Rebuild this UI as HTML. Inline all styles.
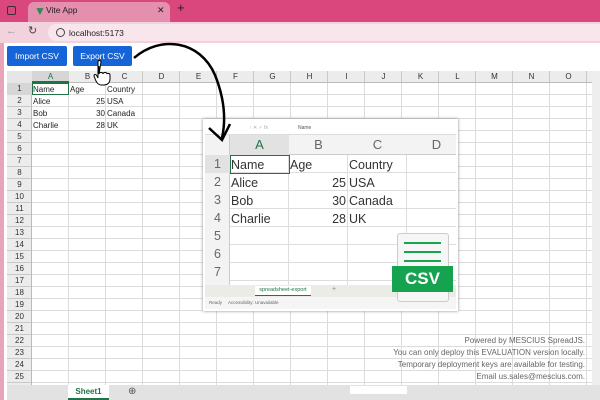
<!DOCTYPE html><html><head><style>
*{margin:0;padding:0;box-sizing:border-box}
body{width:600px;height:400px;overflow:hidden;position:relative;font-family:"Liberation Sans",sans-serif;background:#fff}
.abs{position:absolute}
.t{font-size:8px;color:#222;position:absolute;line-height:12px}
.ch{position:absolute;top:71px;height:12px;width:37px;text-align:center;font-size:8px;line-height:12px;color:#333}
.rh{position:absolute;left:7px;width:25px;height:12px;text-align:center;font-size:8px;line-height:12px;color:#333}
.bt{position:absolute;top:46px;height:20px;background:#1565d8;color:#fff;font-size:8.5px;line-height:20px;text-align:center;border-radius:2px}
.ot{position:absolute;font-size:12.5px;color:#333;line-height:18px}
.orh{position:absolute;left:205px;width:25px;text-align:center;font-size:12.5px;color:#666;line-height:18px}
.och{position:absolute;top:135px;height:20px;width:59px;text-align:center;font-size:13px;color:#666;line-height:20px}
</style></head><body>
<div class="abs" style="left:0;top:0;width:600px;height:22px;background:#d9477c"></div>
<div class="abs" style="left:28px;top:2px;width:142px;height:20px;background:#e48fad;border-radius:6px 6px 0 0"></div>
<div class="abs" style="left:7px;top:6px;width:9px;height:9px;border:1.5px solid #333;border-radius:2px"></div>
<div class="abs" style="left:34px;top:4px;font-size:12px;color:#2a8a5a">▼</div>
<div class="t" style="left:46px;top:4px;font-size:8.5px">Vite App</div>
<div class="t" style="left:157px;top:4px;font-size:9px">✕</div>
<div class="t" style="left:177px;top:2px;font-size:13px">+</div>
<div class="abs" style="left:0;top:22px;width:600px;height:21px;background:#f2d3dd"></div>
<div class="t" style="left:6px;top:25px;font-size:11px;color:#999">←</div>
<div class="t" style="left:28px;top:25px;font-size:11px;color:#444">↻</div>
<div class="abs" style="left:48px;top:24px;width:560px;height:17px;background:#f8e6ec;border-radius:9px"></div>
<div class="abs" style="left:56px;top:28px;width:9px;height:9px;border:1px solid #444;border-radius:50%"></div>
<div class="t" style="left:69px;top:27px;font-size:8.5px">localhost:5173</div>
<div class="abs" style="left:0;top:43px;width:4px;height:357px;background:#e9a3bb"></div>
<div class="bt" style="left:7px;width:60px">Import CSV</div>
<div class="bt" style="left:73px;width:59px">Export CSV</div>
<div class="abs" style="left:32px;top:71px;width:560px;height:314px;background:repeating-linear-gradient(90deg,transparent 0 36px,#dcdcdc 36px 37px),#fff"></div>
<div class="abs" style="left:7px;top:71px;width:585px;height:314px;background:repeating-linear-gradient(180deg,transparent 0 11px,#dcdcdc 11px 12px)"></div>
<div class="abs" style="left:32px;top:71px;width:560px;height:12px;background:repeating-linear-gradient(90deg,#ececec 0 36px,#c8c8c8 36px 37px);border-bottom:1px solid #bbb"></div>
<div class="abs" style="left:7px;top:71px;width:25px;height:314px;background:repeating-linear-gradient(180deg,#ececec 0 11px,#c8c8c8 11px 12px);border-right:1px solid #bbb"></div>
<div class="abs" style="left:7px;top:71px;width:25px;height:12px;background:#e6e6e6"></div>
<div class="abs" style="left:32px;top:71px;width:37px;height:12px;background:#d6d6d6;border-bottom:2px solid #217346"></div>
<div class="abs" style="left:7px;top:83px;width:25px;height:12px;background:#d6d6d6"></div>
<div class="ch" style="left:32px;color:#217346">A</div><div class="ch" style="left:69px">B</div><div class="ch" style="left:106px">C</div><div class="ch" style="left:143px">D</div><div class="ch" style="left:180px">E</div><div class="ch" style="left:217px">F</div><div class="ch" style="left:254px">G</div><div class="ch" style="left:291px">H</div><div class="ch" style="left:328px">I</div><div class="ch" style="left:365px">J</div><div class="ch" style="left:402px">K</div><div class="ch" style="left:439px">L</div><div class="ch" style="left:476px">M</div><div class="ch" style="left:513px">N</div><div class="ch" style="left:550px">O</div>
<div class="rh" style="top:83px">1</div><div class="rh" style="top:95px">2</div><div class="rh" style="top:107px">3</div><div class="rh" style="top:119px">4</div><div class="rh" style="top:131px">5</div><div class="rh" style="top:143px">6</div><div class="rh" style="top:155px">7</div><div class="rh" style="top:167px">8</div><div class="rh" style="top:179px">9</div><div class="rh" style="top:191px">10</div><div class="rh" style="top:203px">11</div><div class="rh" style="top:215px">12</div><div class="rh" style="top:227px">13</div><div class="rh" style="top:239px">14</div><div class="rh" style="top:251px">15</div><div class="rh" style="top:263px">16</div><div class="rh" style="top:275px">17</div><div class="rh" style="top:287px">18</div><div class="rh" style="top:299px">19</div><div class="rh" style="top:311px">20</div><div class="rh" style="top:323px">21</div><div class="rh" style="top:335px">22</div><div class="rh" style="top:347px">23</div><div class="rh" style="top:359px">24</div><div class="rh" style="top:371px">25</div>
<div class="abs" style="left:32px;top:83px;width:37px;height:12px;border:1px solid #217346"></div>
<div class="t" style="left:33px;top:84px">Name</div><div class="t" style="left:70px;top:84px">Age</div><div class="t" style="left:107px;top:84px">Country</div>
<div class="t" style="left:33px;top:96px">Alice</div><div class="t" style="left:70px;top:96px;width:35px;text-align:right">25</div><div class="t" style="left:107px;top:96px">USA</div>
<div class="t" style="left:33px;top:108px">Bob</div><div class="t" style="left:70px;top:108px;width:35px;text-align:right">30</div><div class="t" style="left:107px;top:108px">Canada</div>
<div class="t" style="left:33px;top:120px">Charlie</div><div class="t" style="left:70px;top:120px;width:35px;text-align:right">28</div><div class="t" style="left:107px;top:120px">UK</div>
<div class="abs" style="left:592px;top:71px;width:8px;height:314px;background:#eee"></div>
<div class="abs" style="left:7px;top:385px;width:593px;height:15px;background:#e2e2e2"></div>
<div class="abs" style="left:68px;top:385px;width:41px;height:15px;background:#fff;border-bottom:2px solid #217346;font-size:8px;font-weight:bold;color:#217346;text-align:center;line-height:14px">Sheet1</div>
<div class="t" style="left:128px;top:386px;font-size:10px;color:#555">⊕</div>
<div class="abs" style="left:350px;top:386px;width:57px;height:8px;background:#fff"></div>
<div class="abs" style="left:380px;top:335px;width:205px;font-size:8px;color:#666;text-align:right;line-height:12px">Powered by MESCIUS SpreadJS.<br>You can only deploy this EVALUATION version locally.<br>Temporary deployment keys are available for testing.<br>Email us.sales@mescius.com.</div>
<!-- overlay -->
<div class="abs" style="left:203px;top:119px;width:255px;height:192px;background:#fff;box-shadow:0 0 3px #888"></div>
<div class="abs" style="left:205px;top:121px;width:251px;height:14px;background:#fff;border-bottom:1px solid #ddd"></div>
<div class="t" style="left:298px;top:122px;font-size:5px;color:#555">Name</div>
<div class="t" style="left:250px;top:122px;font-size:5px;color:#aaa">⁝ ✕ ✓ fx</div>
<div class="abs" style="left:230px;top:135px;width:226px;height:150px;background:repeating-linear-gradient(90deg,transparent 0 58px,#ddd 58px 59px)"></div>
<div class="abs" style="left:205px;top:155px;width:251px;height:130px;background:repeating-linear-gradient(180deg,transparent 0 17px,#ddd 17px 18px)"></div>
<div class="abs" style="left:205px;top:135px;width:251px;height:20px;background:#f3f3f3;border-bottom:1px solid #ccc"></div>
<div class="abs" style="left:230px;top:135px;width:59px;height:20px;background:#e2e2e2"></div>
<div class="abs" style="left:205px;top:135px;width:25px;height:150px;background:#f3f3f3;border-right:1px solid #ccc"></div>
<div class="abs" style="left:205px;top:155px;width:25px;height:18px;background:#e2e2e2"></div>
<div class="och" style="left:230px;color:#217346">A</div><div class="och" style="left:289px">B</div><div class="och" style="left:348px">C</div><div class="och" style="left:407px">D</div>
<div class="orh" style="top:155px">1</div><div class="orh" style="top:173px">2</div><div class="orh" style="top:191px">3</div><div class="orh" style="top:209px">4</div><div class="orh" style="top:227px">5</div><div class="orh" style="top:245px">6</div><div class="orh" style="top:263px">7</div>
<div class="abs" style="left:230px;top:155px;width:60px;height:19px;border:1px solid #217346"></div>
<div class="ot" style="left:231px;top:156px">Name</div><div class="ot" style="left:290px;top:156px">Age</div><div class="ot" style="left:349px;top:156px">Country</div>
<div class="ot" style="left:231px;top:174px">Alice</div><div class="ot" style="left:290px;top:174px;width:56px;text-align:right">25</div><div class="ot" style="left:349px;top:174px">USA</div>
<div class="ot" style="left:231px;top:192px">Bob</div><div class="ot" style="left:290px;top:192px;width:56px;text-align:right">30</div><div class="ot" style="left:349px;top:192px">Canada</div>
<div class="ot" style="left:231px;top:210px">Charlie</div><div class="ot" style="left:290px;top:210px;width:56px;text-align:right">28</div><div class="ot" style="left:349px;top:210px">UK</div>
<div class="abs" style="left:205px;top:285px;width:251px;height:12px;background:#ecece6"></div>
<div class="abs" style="left:255px;top:286px;width:56px;height:10px;background:#fff;border-bottom:1px solid #217346;font-size:5.5px;color:#217346;text-align:center;line-height:9px">spreadsheet-export</div>
<div class="t" style="left:332px;top:284px;font-size:7px;color:#888">+</div>
<div class="abs" style="left:205px;top:297px;width:251px;height:12px;background:#f5f5f5;font-size:4.5px;color:#666;line-height:12px;padding-left:4px">Ready &nbsp;&nbsp;&nbsp; Accessibility: Unavailable</div>
<div class="abs" style="left:397px;top:233px;width:52px;height:69px;background:#f6f6f6;border:1px solid #ccc;border-radius:3px"></div>
<div class="abs" style="left:404px;top:242px;width:37px;height:2px;background:#1aa350"></div>
<div class="abs" style="left:404px;top:251px;width:37px;height:2px;background:#1aa350"></div>
<div class="abs" style="left:404px;top:260px;width:37px;height:2px;background:#1aa350"></div>
<div class="abs" style="left:392px;top:266px;width:61px;height:26px;background:#15a34f;color:#fff;font-weight:bold;font-size:17px;text-align:center;line-height:26px">CSV</div>
<svg class="abs" style="left:0;top:0" width="600" height="400"><path d="M134 58 C160 35,200 40,215 75 C225 100,226 120,222 138" fill="none" stroke="#000" stroke-width="2.5"/><path d="M209 128 L222 140 L230 124" fill="none" stroke="#000" stroke-width="2.5"/>
<path d="M99 66 v8 M99 74 c0-2 4-2 4 0 c0-2 4-2 4 0 c0-1 3-1 3 1 v4 c0 4-3 6-6 6 h-3 c-2 0-4-2-5-4 l-2-5 c0-2 2-2 3 0 l1 2 v-16 c0-2 3-2 3 0z" fill="#fff" stroke="#000" stroke-width="1"/></svg>
</body></html>
